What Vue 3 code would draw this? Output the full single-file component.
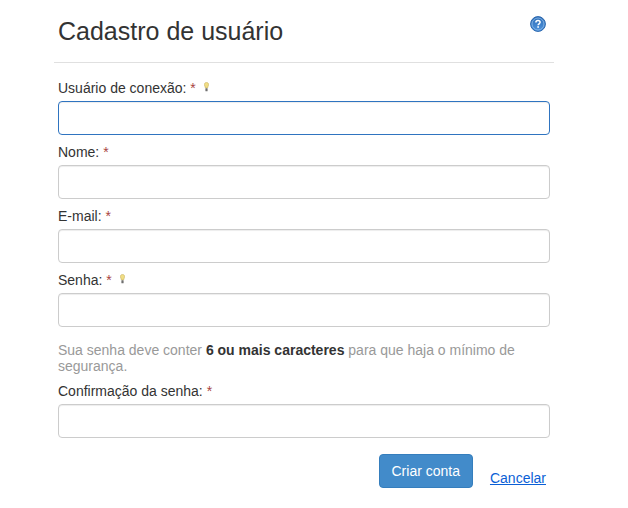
<template>
  <div class="modal">
    <div class="header">
      <h2>Cadastro de usuário</h2>
      <a class="help" href="#" aria-label="Ajuda">
        <svg width="16" height="16" viewBox="0 0 16 16">
          <defs>
            <linearGradient id="helpFill" x1="0" y1="0" x2="0" y2="1">
              <stop offset="0" stop-color="#2f6fb8" />
              <stop offset="1" stop-color="#4f93dc" />
            </linearGradient>
          </defs>
          <circle cx="8" cy="8" r="7.4" fill="url(#helpFill)" stroke="#2a66ad" stroke-width="1" />
          <circle cx="8" cy="8" r="6" fill="none" stroke="#8fbbe8" stroke-width="0.8" />
          <path d="M5.9 6.4C5.9 5.1 6.9 4.5 8 4.5c1.2 0 2.1.7 2.1 1.8 0 1.5-2 1.5-2 3" fill="none" stroke="#fff" stroke-width="1.5" />
          <rect x="7.3" y="10.2" width="1.6" height="1.6" fill="#fff" />
        </svg>
      </a>
    </div>

    <form class="form" @submit.prevent>
      <template v-for="field in fields" :key="field.id">
        <div class="field">
          <label :for="field.id">
            {{ field.label }}: <span class="req">*</span>
            <svg v-if="field.tip" class="tip" width="5" height="10" viewBox="0 0 5 10">
              <path d="M2.5.4C1.2.4.4 1.4.4 2.6c0 1.2.8 1.8 1 3.3h2.2c.2-1.5 1-2.1 1-3.3C4.6 1.4 3.8.4 2.5.4z" fill="#f1de85" stroke="#c4ae55" stroke-width=".6" />
              <rect x="1.4" y="6.3" width="2.2" height="3" rx=".5" fill="#6f6f6f" />
            </svg>
          </label>
          <input :id="field.id" :class="{ focused: field.focused }" :type="field.type" />
        </div>
        <p v-if="field.hint" class="hint">
          Sua senha deve conter <b>6 ou mais caracteres</b> para que haja o mínimo de segurança.
        </p>
      </template>

      <div class="actions">
        <button type="submit">Criar conta</button>
        <a class="cancel" href="#">Cancelar</a>
      </div>
    </form>
  </div>
</template>

<script setup>
const fields = [
  { id: 'login', label: 'Usuário de conexão', type: 'text', tip: true, focused: true },
  { id: 'nome', label: 'Nome', type: 'text' },
  { id: 'email', label: 'E-mail', type: 'text' },
  { id: 'senha', label: 'Senha', type: 'password', tip: true, hint: true },
  { id: 'confirma', label: 'Confirmação da senha', type: 'password' }
]
</script>

<style>
html,
body {
  background: #fff;
}
</style>

<style scoped>
.modal {
  width: 500px;
  margin-left: 54px;
  font-family: "Liberation Sans", Arial, sans-serif;
  font-size: 14px;
  line-height: 20px;
  color: #333;
}

.header {
  display: flex;
  justify-content: space-between;
  align-items: flex-start;
  height: 62px;
  padding: 0 8px 0 4px;
  border-bottom: 1px solid #e0e0e0;
  box-sizing: content-box;
}

.header h2 {
  margin: 18px 0 0;
  font-size: 25px;
  font-weight: 400;
  line-height: 26px;
}

.help {
  display: block;
  margin-top: 16px;
  height: 16px;
}

.form {
  padding: 15px 4px 0;
}

.field label {
  display: block;
  height: 23px;
}

.req {
  color: #a94442;
}

.tip {
  margin-left: 8px;
  vertical-align: 1px;
}

.field input {
  display: block;
  width: 100%;
  height: 34px;
  box-sizing: border-box;
  margin-bottom: 7px;
  padding: 6px 12px;
  background: #fff;
  border: 1px solid #ccc;
  border-radius: 4px;
  box-shadow: inset 0 1px 1px rgba(0, 0, 0, 0.075);
  outline: none;
}

.field input.focused {
  border-color: #2f74c0;
}

.hint {
  margin: 15px 0 0;
  height: 39px;
  line-height: 16px;
  color: #999;
}

.hint b {
  color: #333;
}

.actions {
  display: flex;
  justify-content: flex-end;
  align-items: flex-start;
  gap: 17px;
  margin-top: 16px;
  padding-right: 4px;
}

.actions button {
  height: 34px;
  padding: 0 12px;
  font: inherit;
  color: #fff;
  background: #428bca;
  border: 1px solid #357ebd;
  border-radius: 4px;
}

.cancel {
  margin-top: 14px;
  color: #0b5fd6;
}
</style>
